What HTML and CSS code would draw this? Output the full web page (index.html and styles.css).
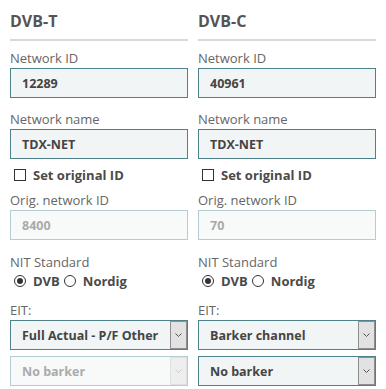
FILE: index.html
```html
<html>
    <head>
        <title>Network settings</title>
        <link rel="stylesheet" href="styles.css">
    </head>
    <body>
        <div class="columns">
            <div class="column">
                <div class="head">DVB-T</div>

                <div class="field first">
                    <label>Network ID</label>
                    <input type="text" class="box" value="12289" readonly>
                </div>
                <div class="field">
                    <label>Network name</label>
                    <input type="text" class="box" value="TDX-NET" readonly>
                </div>

                <div class="check-row">
                    <span class="checkbox"></span>Set original ID
                </div>

                <div class="field orig">
                    <label>Orig. network ID</label>
                    <input type="text" class="box disabled" value="8400" readonly>
                </div>

                <div class="field nit">
                    <label>NIT Standard</label>
                    <div class="radio-row">
                        <span class="radio checked"></span>DVB
                        <span class="radio second"></span>Nordig
                    </div>
                </div>

                <div class="field eit">
                    <label>EIT:</label>
                    <div class="select box">
                        <span>Full Actual - P/F Other</span>
                        <span class="arrow"><svg width="7" height="4" viewBox="0 0 7 4"><path d="M0.5 0.5 L3.5 3.5 L6.5 0.5" fill="none" stroke="#555" stroke-width="1"/></svg></span>
                    </div>
                    <div class="select box disabled second-select">
                        <span>No barker</span>
                        <span class="arrow"><svg width="7" height="4" viewBox="0 0 7 4"><path d="M0.5 0.5 L3.5 3.5 L6.5 0.5" fill="none" stroke="#ccc" stroke-width="1"/></svg></span>
                    </div>
                </div>
            </div>

            <div class="column">
                <div class="head">DVB-C</div>

                <div class="field first">
                    <label>Network ID</label>
                    <input type="text" class="box" value="40961" readonly>
                </div>
                <div class="field">
                    <label>Network name</label>
                    <input type="text" class="box" value="TDX-NET" readonly>
                </div>

                <div class="check-row">
                    <span class="checkbox"></span>Set original ID
                </div>

                <div class="field orig">
                    <label>Orig. network ID</label>
                    <input type="text" class="box disabled" value="70" readonly>
                </div>

                <div class="field nit">
                    <label>NIT Standard</label>
                    <div class="radio-row">
                        <span class="radio checked"></span>DVB
                        <span class="radio second"></span>Nordig
                    </div>
                </div>

                <div class="field eit">
                    <label>EIT:</label>
                    <div class="select box">
                        <span>Barker channel</span>
                        <span class="arrow"><svg width="7" height="4" viewBox="0 0 7 4"><path d="M0.5 0.5 L3.5 3.5 L6.5 0.5" fill="none" stroke="#555" stroke-width="1"/></svg></span>
                    </div>
                    <div class="select box second-select">
                        <span>No barker</span>
                        <span class="arrow"><svg width="7" height="4" viewBox="0 0 7 4"><path d="M0.5 0.5 L3.5 3.5 L6.5 0.5" fill="none" stroke="#555" stroke-width="1"/></svg></span>
                    </div>
                </div>
            </div>
        </div>
    </body>
</html>
```

FILE: styles.css
```css
* {
    font-family: 'Open Sans', sans-serif;
    box-sizing: border-box;
}

body {
    margin: 0;
    padding: 0 10px;
    background: #ffffff;
    color: #666666;
}

.columns {
    display: flex;
    gap: 10px;
}

.column {
    width: 179px;
}

.head {
    padding-top: 11px;
    height: 41px;
    line-height: 20px;
    font-size: 16px;
    font-weight: 700;
    color: #555555;
    border-bottom: 2px solid #d9d9d9;
}

.field {
    margin-top: 12px;
}

.field.first {
    margin-top: 8px;
}

.field label {
    display: block;
    font-size: 13px;
    line-height: 18px;
    margin-bottom: 1px;
    color: #666666;
}

.box {
    display: block;
    width: 100%;
    height: 30px;
    margin: 0;
    padding: 0 0 0 11px;
    border: 1px solid #4f8189;
    background: #f1f5f6;
    font-size: 12.5px;
    font-weight: 700;
    color: #444444;
    outline: none;
}

.box.disabled {
    border-color: #b4cdd1;
    background: #f8fafa;
    color: #aaaaaa;
}

.check-row {
    display: flex;
    align-items: center;
    margin-top: 7px;
    height: 18px;
    padding-left: 4px;
    font-size: 13px;
    font-weight: 700;
    color: #4a4a4a;
}

.checkbox {
    display: inline-block;
    width: 12px;
    height: 12px;
    border: 1px solid #333333;
    margin-right: 7px;
}

.field.orig {
    margin-top: 7px;
}

.field.nit {
    margin-top: 13px;
}

.radio-row {
    display: flex;
    align-items: center;
    height: 18px;
    padding-left: 4px;
    font-size: 13px;
    font-weight: 700;
    color: #4a4a4a;
}

.radio {
    display: inline-block;
    width: 12px;
    height: 12px;
    border: 1px solid #333333;
    border-radius: 50%;
    margin-right: 7px;
    position: relative;
}

.radio.second {
    margin-left: 4px;
}

.radio.checked::after {
    content: '';
    position: absolute;
    left: 2px;
    top: 2px;
    width: 6px;
    height: 6px;
    border-radius: 50%;
    background: #333333;
}

.field.eit {
    margin-top: 11px;
}

.select {
    display: flex;
    align-items: center;
    justify-content: space-between;
    padding-right: 0;
}

.select .arrow {
    display: flex;
    align-items: center;
    justify-content: center;
    width: 17px;
    height: 28px;
    background: #e2e2e2;
    border: 1px solid #8f8f8f;
}

.select.disabled .arrow {
    background: #eeeeee;
    border-color: #e0e0e0;
}

.second-select {
    margin-top: 6px;
}
```
